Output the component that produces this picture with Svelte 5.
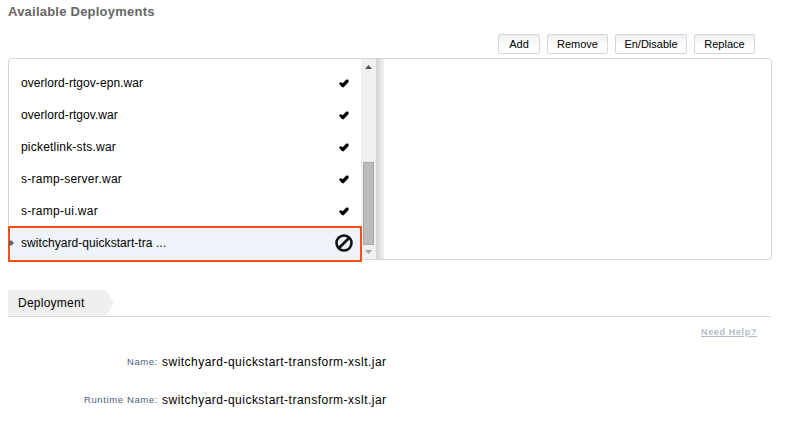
<script>
  const actions = [
    { label: 'Add', width: 42 },
    { label: 'Remove', width: 61 },
    { label: 'En/Disable', width: 72 },
    { label: 'Replace', width: 61 }
  ];
  const deployments = [
    { name: 'overlord-rtgov-epn.war', enabled: true, spacing: 0.06 },
    { name: 'overlord-rtgov.war', enabled: true, spacing: 0.06 },
    { name: 'picketlink-sts.war', enabled: true, spacing: 0.2 },
    { name: 's-ramp-server.war', enabled: true, spacing: 0.26 },
    { name: 's-ramp-ui.war', enabled: true, spacing: 0.28 },
    { name: 'switchyard-quickstart-tra ...', enabled: false, spacing: 0.06 }
  ];
  const details = [
    { label: 'Name:', value: 'switchyard-quickstart-transform-xslt.jar' },
    { label: 'Runtime Name:', value: 'switchyard-quickstart-transform-xslt.jar' }
  ];
</script>

<main>
  <h1><span>Available Deployments</span></h1>
  <div class="actions">
    {#each actions as action}
      <button style="width: {action.width}px">{action.label}</button>
    {/each}
  </div>

  <section class="panel">
    <div class="list">
      {#each deployments as item}
        <div class="row" class:selected={!item.enabled}>
          <span style="letter-spacing: {item.spacing}px">{item.name}</span>
          {#if item.enabled}
            <svg class="check" width="10" height="9" viewBox="0 0 10 9">
              <path d="M0 4.4 1.6 3 3.7 4.2 7.3.4 9.6 .8 9.4 3.2 4.4 8.5 2.5 7.8Z" />
            </svg>
          {:else}
            <svg class="ban" width="18" height="18" viewBox="0 0 18 18">
              <circle cx="9" cy="9" r="7.5" />
              <path d="M4 14 14 4" />
            </svg>
            <svg class="marker" width="5" height="6" viewBox="0 0 5 6">
              <path d="M0 .5H2.5L5 3 2.5 5.5H0Z" />
            </svg>
          {/if}
        </div>
      {/each}
    </div>
    <div class="scrollbar">
      <svg width="7" height="4" viewBox="0 0 7 4"><path d="M0 4 3.5 0 7 4Z" fill="#505050" /></svg>
      <div class="thumb"></div>
      <svg width="7" height="4" viewBox="0 0 7 4"><path d="M0 0 3.5 4 7 0Z" fill="#a3a3a3" /></svg>
    </div>
    <div class="splitter"></div>
  </section>

  <div class="tabs">
    <div class="tab"><span>Deployment</span></div>
  </div>
  <div class="help"><a href="#help">Need Help?</a></div>
  <dl>
    {#each details as detail}
      <div class="field">
        <dt><span>{detail.label}</span></dt>
        <dd><span>{detail.value}</span></dd>
      </div>
    {/each}
  </dl>
</main>

<style>
  :global(body) { background: #fff; overflow: hidden; }
  main {
    box-sizing: border-box;
    width: 785px;
    height: 422px;
    padding: 4px 13px 0 8px;
    font-family: "Liberation Sans", Arial, sans-serif;
    font-size: 12px;
    color: #000;
  }
  h1 {
    margin: 0;
    height: 30px;
    font-size: 13px;
    line-height: 16px;
    color: #666;
    letter-spacing: 0.23px;
  }
  .actions {
    display: flex;
    justify-content: flex-end;
    gap: 7px;
    padding-right: 17px;
    height: 24px;
  }
  button {
    box-sizing: border-box;
    height: 20px;
    padding: 0;
    border: 1px solid #d6d6d6;
    border-radius: 2px;
    background: linear-gradient(#eee, #fff 60%);
    font: 11px/18px "Liberation Sans", Arial, sans-serif;
    color: #000;
    white-space: nowrap;
  }
  .panel {
    box-sizing: border-box;
    display: flex;
    width: 764px;
    height: 202px;
    border: 1px solid #d6d6d6;
    border-radius: 4px;
  }
  .list { width: 352px; padding-top: 8px; box-sizing: border-box; }
  .row {
    position: relative;
    box-sizing: border-box;
    display: flex;
    align-items: center;
    justify-content: space-between;
    height: 32px;
    padding: 0 12px;
    white-space: pre;
  }
  .selected {
    z-index: 1;
    height: 36px;
    margin: -1px -1px 0 -1px;
    padding: 0 7px 2px 11px;
    border: 2px solid #fa4e14;
    background: #eef3fa;
  }
  .marker { position: absolute; left: -1px; top: 12px; fill: #666; }
  .ban { fill: none; stroke: #111; stroke-width: 2.6; }
  .scrollbar {
    display: flex;
    flex-direction: column;
    align-items: center;
    width: 15px;
    padding-top: 6px;
    box-sizing: border-box;
    background: #f0f0f0;
  }
  .thumb {
    box-sizing: border-box;
    width: 11px;
    height: 83px;
    margin: 93px 0 5px;
    border: 1px solid #a8a8a8;
    background: #bcbcbc;
  }
  .splitter { width: 8px; background: linear-gradient(90deg, #d2d2d2, #f2f2f2); }
  .tabs {
    box-sizing: border-box;
    width: 763px;
    height: 27px;
    margin-top: 30px;
    border-bottom: 1px solid #d6d6d6;
  }
  .tab {
    box-sizing: border-box;
    width: 106px;
    height: 26px;
    padding-left: 10px;
    line-height: 26px;
    letter-spacing: 0.25px;
    background: #efefef;
    clip-path: polygon(0 0, 98px 0, 100% 50%, 98px 100%, 0 100%);
  }
  .help {
    display: flex;
    justify-content: flex-end;
    box-sizing: border-box;
    height: 25px;
    padding: 9px 15px 0 0;
  }
  a {
    color: #b0bcc8;
    font-size: 9px;
    font-weight: bold;
    line-height: 12px;
    letter-spacing: 0.65px;
  }
  dl { margin: 10px 0 0; }
  .field { display: flex; height: 38px; line-height: 20px; }
  dt { width: 150px; text-align: right; font-size: 9.5px; color: #4a5d75; letter-spacing: 0.62px; }
  dd { margin: 0 0 0 4px; letter-spacing: 0.48px; }
</style>
